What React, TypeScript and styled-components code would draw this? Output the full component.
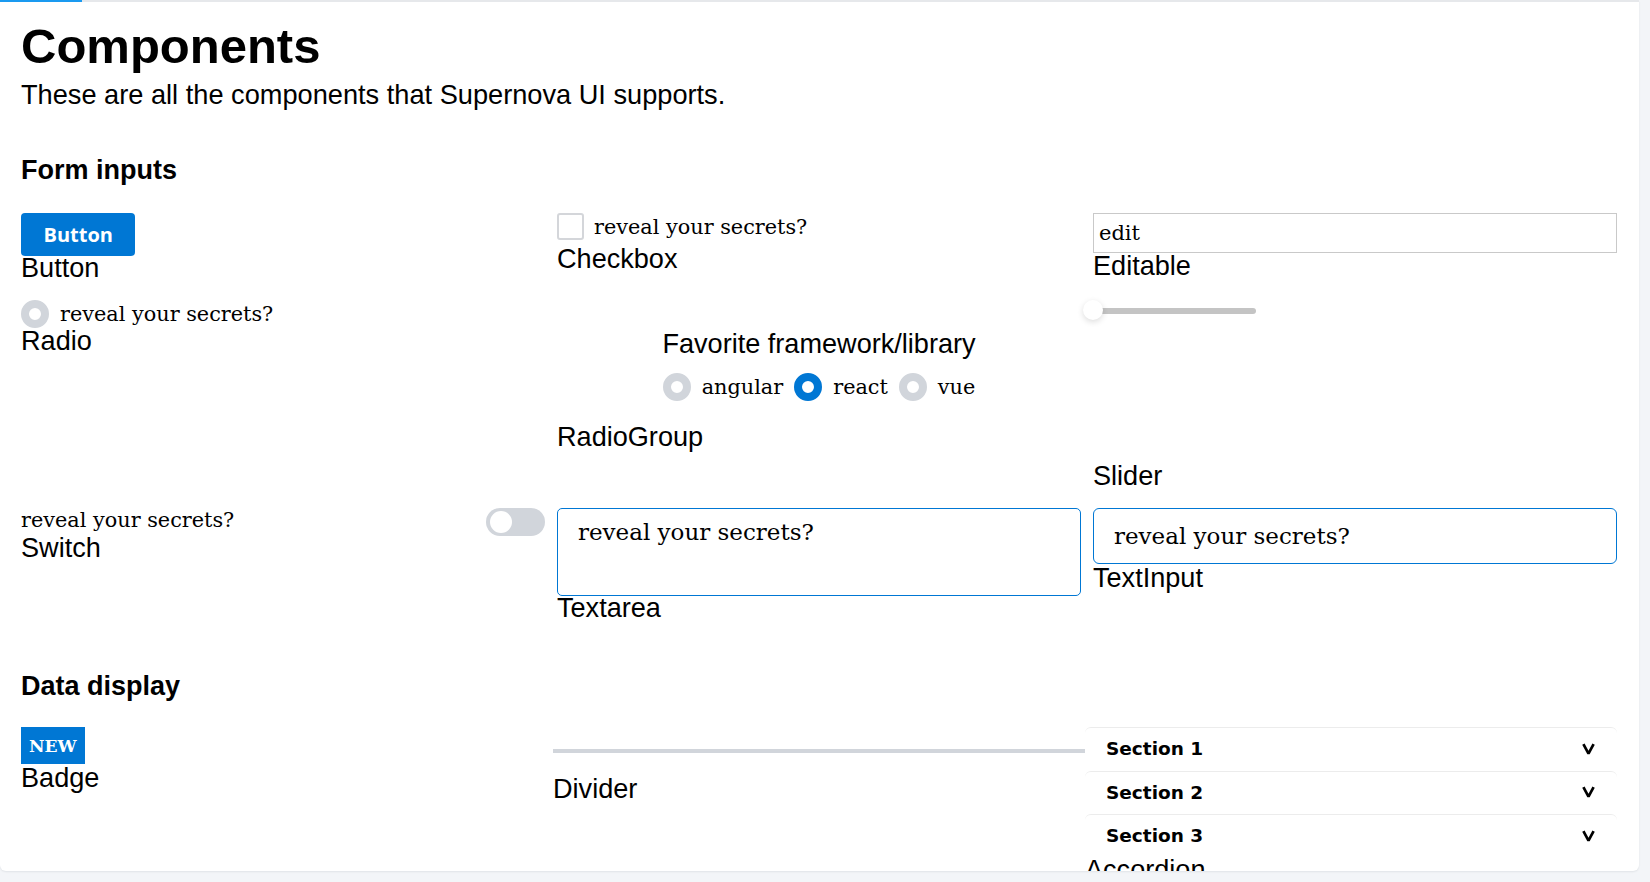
import React from "react";
import styled, { createGlobalStyle } from "styled-components";

const GlobalStyle = createGlobalStyle`
  html, body { margin: 0; padding: 0; background: #f3f5f8; }
  body { font-family: "Liberation Sans", Arial, sans-serif; color: #000; }
  *, *::before, *::after { box-sizing: border-box; }
`;

const BLUE = "#0077d4";
const GREY = "#d1d5db";
const SERIF = `"DejaVu Serif", "Liberation Serif", serif`;

const Page = styled.div`
  width: 1650px;
  height: 882px;
  padding: 0 11px 11px 0;
  background: #f3f5f8;
`;

const Card = styled.div`
  position: relative;
  width: 1639px;
  height: 871px;
  background: #fff;
  border-radius: 0 0 6px 6px;
  box-shadow: 0 1px 2px rgba(15, 23, 42, 0.08);
  overflow: hidden;
`;

const Progress = styled.div`
  position: absolute;
  top: 0;
  left: 0;
  right: 0;
  height: 2px;
  background: #e6e8eb;
  z-index: 2;
`;

const ProgressFill = styled.div<{ $w: number }>`
  width: ${(p) => p.$w}px;
  height: 100%;
  background: #1a9af0;
`;

const Scroller = styled.div`
  height: 100%;
  overflow-y: auto;
  &::-webkit-scrollbar {
    width: 6px;
  }
  &::-webkit-scrollbar-track {
    background: transparent;
  }
  &::-webkit-scrollbar-thumb {
    background: #a3a3a3;
    border-right: 2px solid transparent;
    background-clip: padding-box;
  }
`;

const Content = styled.main`
  min-height: 2155px;
  padding: 18px 22px 0 21px;
`;

const Title = styled.h1`
  margin: 0;
  font-size: 49px;
  line-height: 56px;
  font-weight: 700;
`;

const Subtitle = styled.p`
  margin: 5px 0 0;
  font-size: 27.2px;
  line-height: 31px;
`;

const SectionTitle = styled.h2<{ $mt: number; $mb: number }>`
  margin: ${(p) => p.$mt}px 0 ${(p) => p.$mb}px;
  font-size: 27px;
  line-height: 31px;
  font-weight: 700;
`;

const FormGrid = styled.div`
  display: grid;
  grid-template-columns: repeat(3, 1fr);
  column-gap: 12px;
  row-gap: 20px;
  align-items: start;
`;

const DataGrid = styled.div`
  display: grid;
  grid-template-columns: repeat(3, 1fr);
  align-items: start;
`;

const Cell = styled.div`
  display: flex;
  flex-direction: column;
  align-items: stretch;
  min-width: 0;
`;

const Label = styled.div<{ $mt?: number }>`
  margin-top: ${(p) => p.$mt ?? 0}px;
  font-size: 27.1px;
  line-height: 24px;
  white-space: nowrap;
`;

const SerifText = styled.span`
  font-family: ${SERIF};
  font-size: 20.8px;
  line-height: 24px;
  white-space: nowrap;
`;

const PrimaryButton = styled.button`
  align-self: flex-start;
  height: 43px;
  padding: 0 22.5px;
  border: none;
  border-radius: 4px;
  background: ${BLUE};
  color: #fff;
  font-family: "Open Sans", "Noto Sans", sans-serif;
  font-weight: 700;
  font-size: 20px;
  cursor: pointer;
`;

const CheckRow = styled.label`
  display: flex;
  align-items: center;
  gap: 10px;
  height: 27px;
`;

const CheckBox = styled.span`
  width: 27px;
  height: 27px;
  border: 2px solid #d4d6da;
  border-radius: 3px;
  background: #fff;
  flex: none;
`;

const EditableInput = styled.input`
  width: 100%;
  height: 40px;
  padding: 0 5px;
  border: 1px solid #c9c9c9;
  border-radius: 0;
  font-family: ${SERIF};
  font-size: 21px;
  color: #000;
  outline: none;
`;

const RadioRow = styled.label`
  display: flex;
  align-items: center;
  gap: 11px;
  height: 28px;
`;

const RadioCircle = styled.span<{ $checked?: boolean }>`
  width: 28px;
  height: 28px;
  border-radius: 50%;
  border: 8px solid ${(p) => (p.$checked ? BLUE : GREY)};
  background: #fff;
  flex: none;
`;

const GroupCell = styled(Cell)`
  padding-top: 28px;
`;

const Legend = styled.div`
  align-self: center;
  font-size: 27.1px;
  line-height: 31px;
`;

const GroupOptions = styled.div`
  align-self: center;
  display: flex;
  gap: 11px;
  margin-top: 14px;
`;

const SliderArea = styled.div`
  height: 164px;
`;

const SliderTrack = styled.div`
  position: relative;
  width: 163px;
  height: 6px;
  margin-top: 8px;
  border-radius: 3px;
  background: #c4c4c4;
`;

const SliderThumb = styled.span`
  position: absolute;
  left: -10px;
  top: -8px;
  width: 20px;
  height: 20px;
  border-radius: 50%;
  background: #fff;
  box-shadow: 0 2px 6px rgba(0, 0, 0, 0.14);
`;

const SwitchRow = styled.label`
  display: flex;
  justify-content: space-between;
  align-items: flex-start;
  height: 28px;
`;

const SwitchTrack = styled.span`
  position: relative;
  width: 59px;
  height: 28px;
  border-radius: 14px;
  background: ${GREY};
  flex: none;
`;

const SwitchKnob = styled.span`
  position: absolute;
  left: 4px;
  top: 3px;
  width: 22px;
  height: 22px;
  border-radius: 50%;
  background: #fff;
`;

const TextArea = styled.textarea`
  display: block;
  width: 100%;
  height: 88px;
  padding: 10px 20px;
  border: 1px solid ${BLUE};
  border-radius: 5px;
  font-family: ${SERIF};
  font-size: 23px;
  line-height: 27px;
  color: #000;
  resize: none;
  outline: none;
`;

const TextInput = styled.input`
  display: block;
  width: 100%;
  height: 56px;
  padding: 0 20px;
  border: 1px solid ${BLUE};
  border-radius: 6px;
  font-family: ${SERIF};
  font-size: 23px;
  color: #000;
  outline: none;
`;

const Badge = styled.span`
  align-self: flex-start;
  height: 37px;
  padding: 0 8px;
  display: flex;
  align-items: center;
  background: ${BLUE};
  color: #fff;
  font-family: ${SERIF};
  font-weight: 700;
  font-size: 17px;
`;

const DividerLine = styled.hr`
  width: 100%;
  height: 4px;
  margin: 22px 0 23.5px;
  border: none;
  background: ${GREY};
`;

const AccordionList = styled.div`
  display: flex;
  flex-direction: column;
`;

const AccordionItem = styled.button`
  display: flex;
  align-items: center;
  justify-content: space-between;
  width: 100%;
  height: 43.5px;
  padding: 0 22px 1px 21px;
  border: none;
  border-top: 1px solid #ececec;
  border-radius: 6px 6px 0 0;
  background: #fff;
  font-family: "DejaVu Sans", "Noto Sans", sans-serif;
  font-weight: 700;
  font-size: 18.5px;
  color: #000;
  text-align: left;
  cursor: pointer;
`;

const Chevron = () => (
  <svg width="13" height="12" viewBox="0 0 13 12" aria-hidden="true">
    <polyline
      points="1.4,1.2 6.5,10.6 11.6,1.2"
      fill="none"
      stroke="#000"
      strokeWidth="2.7"
      strokeLinejoin="bevel"
    />
  </svg>
);

const options = [
  { label: "angular", checked: false },
  { label: "react", checked: true },
  { label: "vue", checked: false },
];

export default function App() {
  return (
    <>
      <GlobalStyle />
      <Page>
        <Card>
          <Progress>
            <ProgressFill $w={82} />
          </Progress>
          <Scroller>
            <Content>
              <Title>Components</Title>
              <Subtitle>These are all the components that Supernova UI supports.</Subtitle>

              <SectionTitle $mt={45} $mb={27}>Form inputs</SectionTitle>
              <FormGrid>
                <Cell>
                  <PrimaryButton>Button</PrimaryButton>
                  <Label>Button</Label>
                </Cell>
                <Cell>
                  <CheckRow>
                    <CheckBox />
                    <SerifText>reveal your secrets?</SerifText>
                  </CheckRow>
                  <Label $mt={6.7}>Checkbox</Label>
                </Cell>
                <Cell>
                  <EditableInput defaultValue="edit" />
                  <Label $mt={1}>Editable</Label>
                </Cell>

                <Cell>
                  <RadioRow>
                    <RadioCircle />
                    <SerifText>reveal your secrets?</SerifText>
                  </RadioRow>
                  <Label $mt={1}>Radio</Label>
                </Cell>
                <GroupCell>
                  <Legend>Favorite framework/library</Legend>
                  <GroupOptions>
                    {options.map((o) => (
                      <RadioRow key={o.label}>
                        <RadioCircle $checked={o.checked} />
                        <SerifText>{o.label}</SerifText>
                      </RadioRow>
                    ))}
                  </GroupOptions>
                  <Label $mt={23.7}>RadioGroup</Label>
                </GroupCell>
                <Cell>
                  <SliderArea>
                    <SliderTrack>
                      <SliderThumb />
                    </SliderTrack>
                  </SliderArea>
                  <Label>Slider</Label>
                </Cell>

                <Cell>
                  <SwitchRow>
                    <SerifText>reveal your secrets?</SerifText>
                    <SwitchTrack>
                      <SwitchKnob />
                    </SwitchTrack>
                  </SwitchRow>
                  <Label>Switch</Label>
                </Cell>
                <Cell>
                  <TextArea defaultValue="reveal your secrets?" />
                  <Label>Textarea</Label>
                </Cell>
                <Cell>
                  <TextInput defaultValue="reveal your secrets?" />
                  <Label $mt={1.7}>TextInput</Label>
                </Cell>
              </FormGrid>

              <SectionTitle $mt={51} $mb={25}>Data display</SectionTitle>
              <DataGrid>
                <Cell>
                  <Badge>NEW</Badge>
                  <Label $mt={1.5}>Badge</Label>
                </Cell>
                <Cell>
                  <DividerLine />
                  <Label>Divider</Label>
                </Cell>
                <Cell>
                  <AccordionList>
                    {["Section 1", "Section 2", "Section 3"].map((s) => (
                      <AccordionItem key={s}>
                        <span>{s}</span>
                        <Chevron />
                      </AccordionItem>
                    ))}
                  </AccordionList>
                  <Label>Accordion</Label>
                </Cell>
              </DataGrid>
            </Content>
          </Scroller>
        </Card>
      </Page>
    </>
  );
}
